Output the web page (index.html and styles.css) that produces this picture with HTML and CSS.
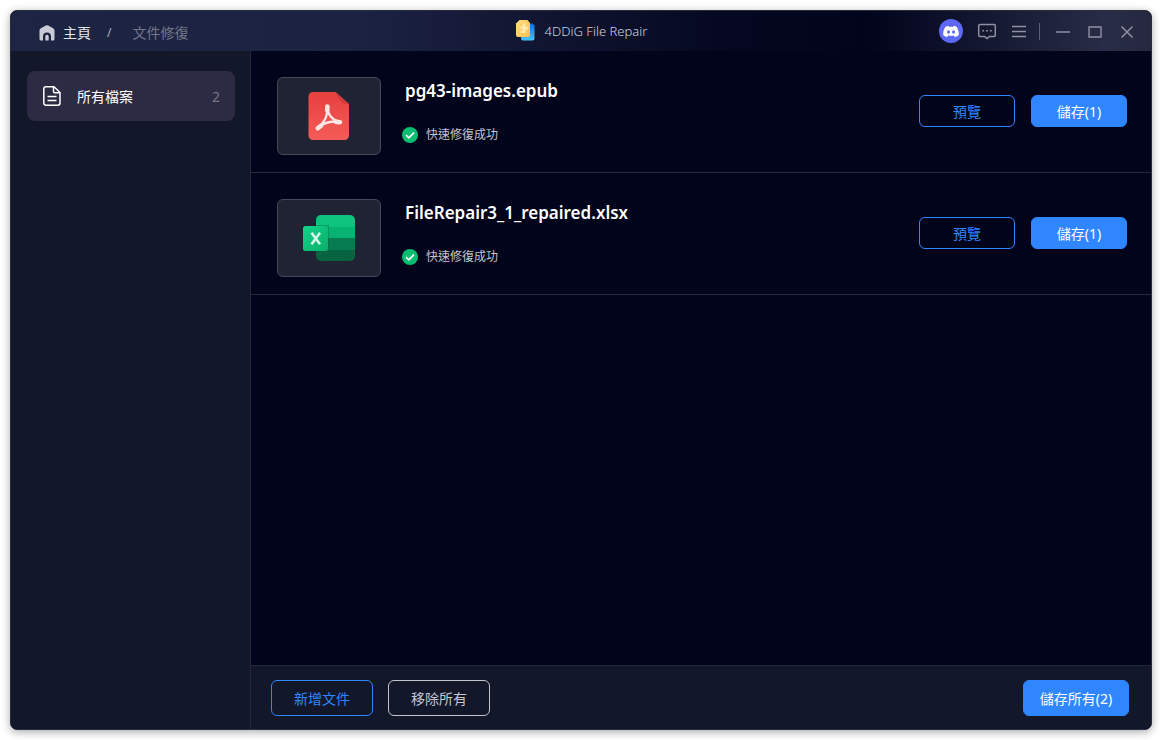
FILE: index.html
```
<!DOCTYPE html>
<html lang="zh-Hant">
<head>
    <meta charset="UTF-8">
    <meta name="viewport" content="width=device-width, initial-scale=1.0">
    <title>4DDiG File Repair</title>
    <link rel="stylesheet" href="styles.css">
</head>
<body>
    <div class="window">
        <header class="titlebar">
            <nav class="breadcrumb">
                <a class="home" href="#">
                    <svg width="16" height="16" viewBox="0 0 16 16"><path d="M6.800.6Q8 0 9.200.6l4.900 2.600Q15.500 4 15.500 5.600V14a1.500 1.500 0 0 1-1.500 1.500h-2V11.500a4 4 0 0 0-8 0v4H2A1.500 1.500 0 0 1 .5 14V5.600Q.5 4 1.900 3.200z" fill="#c9ccd6"/><path d="M6.300 15.500v-4a1.700 1.700 0 0 1 3.400 0v4z" fill="#c9ccd6"/></svg>
                    <span>主頁</span>
                </a>
                <span class="slash">/</span>
                <span class="current">文件修復</span>
            </nav>
            <div class="app-title">
                <svg width="20" height="22" viewBox="0 0 20 22">
                    <defs>
                        <linearGradient id="logoYellow" x1="0" y1="0" x2="1" y2="1"><stop offset="0" stop-color="#ffdc84"/><stop offset="1" stop-color="#ffc04a"/></linearGradient>
                        <linearGradient id="logoBlue" x1="0" y1="0" x2="0" y2="1"><stop offset="0" stop-color="#1667ee"/><stop offset="1" stop-color="#49c3ff"/></linearGradient>
                    </defs>
                    <path d="M8 3.500h9.500l2 2V18.500a2 2 0 0 1-2 2H8a2 2 0 0 1-2-2z" fill="url(#logoBlue)"/>
                    <path d="M4.500 0H12.500l2.500 3v12a2 2 0 0 1-2 2H3a2 2 0 0 1-2-2V3.500z" fill="url(#logoYellow)"/>
                    <path d="M8 3.500h2.500V7H13v2.500h-2.500v3.500H5.500v-2.500H8V9H5.500V6.500H8z" fill="#ffecae"/>
                </svg>
                <span>4DDiG File Repair</span>
            </div>
            <div class="controls">
                <button class="tool" type="button" aria-label="Discord">
                    <svg width="24" height="24" viewBox="0 0 24 24"><circle cx="12" cy="12" r="12" fill="#5f68f5"/><path d="M9.400 6.800 8.900 7.100C7.600 7.400 6.600 7.800 6.200 8.100 4.700 10.600 4.100 13.200 4.200 16c1.100 1.100 2.500 1.700 4 1.900l1-1.500c1.900.4 3.700.4 5.600 0l1 1.500c1.500-.2 2.900-.8 4-1.900.1-2.800-.5-5.400-2-7.900-.8-.6-1.900-1-3.200-1.300l-.6 1.100c-1.300-.2-2.700-.2-4 0z" fill="#fff"/><ellipse cx="9.500" cy="13" rx="1.500" ry="1.700" fill="#5f68f5"/><ellipse cx="14.500" cy="13" rx="1.500" ry="1.700" fill="#5f68f5"/></svg>
                </button>
                <button class="tool message" type="button" aria-label="意見">
                    <svg width="24" height="24" viewBox="0 0 24 24" fill="none" stroke="#8e91a2" stroke-width="1.500"><path d="M5 5.500h14a1.300 1.300 0 0 1 1.300 1.300v9.400A1.300 1.300 0 0 1 19 17.500h-4.500L12 19.500l-2.500-2H5a1.300 1.300 0 0 1-1.300-1.300V6.800A1.300 1.300 0 0 1 5 5.500z"/><path d="M7.300 11.800h1.800M11.100 11.800h1.800M14.900 11.800h1.800"/></svg>
                </button>
                <button class="tool" type="button" aria-label="選單">
                    <svg width="24" height="24" viewBox="0 0 24 24" stroke="#8e91a2" stroke-width="1.400"><path d="M5 7.500h14M5 12.500h14M5 17.500h14"/></svg>
                </button>
                <span class="divider"></span>
                <button class="tool minimize" type="button" aria-label="最小化">
                    <svg width="24" height="24" viewBox="0 0 24 24" stroke="#8e91a2" stroke-width="1.500"><path d="M5 13h14"/></svg>
                </button>
                <button class="tool" type="button" aria-label="最大化">
                    <svg width="24" height="24" viewBox="0 0 24 24" fill="none" stroke="#8e91a2" stroke-width="1.400"><path d="M6 8h12v10H6z"/></svg>
                </button>
                <button class="tool" type="button" aria-label="關閉">
                    <svg width="24" height="24" viewBox="0 0 24 24" stroke="#8e91a2" stroke-width="1.500"><path d="M6.500 7.500l11 11M17.500 7.500l-11 11"/></svg>
                </button>
            </div>
        </header>

        <aside class="sidebar">
            <a class="side-item" href="#">
                <svg width="18" height="20" viewBox="0 0 18 20" fill="none" stroke="#fff" stroke-width="1.500" stroke-linejoin="round"><path d="M3 .8h8L17 6.500V17a2.200 2.200 0 0 1-2.200 2.200H3A2.200 2.200 0 0 1 .8 17V3A2.200 2.200 0 0 1 3 .8z"/><path d="M10.500 1v4.300a1.500 1.500 0 0 0 1.500 1.500h4.800M4.500 10.500h9M4.500 14.500h9"/></svg>
                <span>所有檔案</span>
                <span class="count">2</span>
            </a>
        </aside>

        <main class="content">
            <ul class="files">
                <li class="file">
                    <div class="thumb">
                        <svg width="42" height="50" viewBox="0 0 42 50">
                            <defs><linearGradient id="pdfRed" x1="0" y1="0" x2="0" y2="1"><stop offset="0" stop-color="#e6413e"/><stop offset="1" stop-color="#f45b58"/></linearGradient></defs>
                            <path d="M5 1h22.500L41 13v31.500a4.500 4.500 0 0 1-4.500 4.500H5A4.500 4.500 0 0 1 .5 44.500v-39A4.500 4.500 0 0 1 5 1z" fill="url(#pdfRed)"/>
                            <path d="M27.500 1 41 13h-4Q31 11 27.500 1z" fill="#d23a3c"/>
                            <path d="M19.400 15.500c0 7.500 4.600 14 13 15.500M19.400 15.500c1 8-2.400 15.500-10 22M9.400 37.500c5-5 13-8 23-6.500" fill="none" stroke="#ffe5e4" stroke-width="2.400" stroke-linecap="round"/>
                            <path d="M19.300 15.500v4M32 31.200l-4-.3M9.800 37.300l3.200-2.600" fill="none" stroke="#ffe5e4" stroke-width="4.600" stroke-linecap="round"/>
                        </svg>
                    </div>
                    <div class="info">
                        <h2 class="name">pg43-images.epub</h2>
                        <p class="status">
                            <svg width="16" height="16" viewBox="0 0 16 16"><circle cx="8" cy="8" r="8" fill="#0abd70"/><path d="m4 8.200 2.800 2.700L12 5.600" fill="none" stroke="#fff" stroke-width="1.600"/></svg>
                            <span>快速修復成功</span>
                        </p>
                    </div>
                    <div class="actions">
                        <button class="btn outline" type="button">預覽</button>
                        <button class="btn primary" type="button">儲存(1)</button>
                    </div>
                </li>
                <li class="file">
                    <div class="thumb">
                        <svg width="52" height="48" viewBox="0 0 52 48">
                            <defs>
                                <clipPath id="sheet"><rect x="13" y="1" width="39" height="46" rx="5"/></clipPath>
                                <linearGradient id="xlsGreen" x1="0" y1="0" x2="1" y2="1"><stop offset="0" stop-color="#12d48a"/><stop offset="1" stop-color="#0aae69"/></linearGradient>
                            </defs>
                            <g clip-path="url(#sheet)">
                                <path d="M13 1h39v12H13z" fill="#0dc37d"/>
                                <path d="M13 13h39v11H13z" fill="#08b372"/>
                                <path d="M13 24h39v12H13z" fill="#067d50"/>
                                <path d="M13 36h39v11H13z" fill="#076340"/>
                                <path d="M13 11h13v27H13z" fill="#045f3d" opacity=".35"/>
                            </g>
                            <rect y="12" width="25" height="25" rx="2.500" fill="url(#xlsGreen)"/>
                            <path d="m8.500 18.800 8.500 11.400M17 18.800 8.500 30.200" stroke="#d5f8e9" stroke-width="2.600"/>
                        </svg>
                    </div>
                    <div class="info">
                        <h2 class="name">FileRepair3_1_repaired.xlsx</h2>
                        <p class="status">
                            <svg width="16" height="16" viewBox="0 0 16 16"><circle cx="8" cy="8" r="8" fill="#0abd70"/><path d="m4 8.200 2.800 2.700L12 5.600" fill="none" stroke="#fff" stroke-width="1.600"/></svg>
                            <span>快速修復成功</span>
                        </p>
                    </div>
                    <div class="actions">
                        <button class="btn outline" type="button">預覽</button>
                        <button class="btn primary" type="button">儲存(1)</button>
                    </div>
                </li>
            </ul>
            <footer class="footer">
                <button class="btn large outline" type="button">新增文件</button>
                <button class="btn large plain" type="button">移除所有</button>
                <button class="btn large primary save-all" type="button">儲存所有(2)</button>
            </footer>
        </main>
    </div>
</body>
</html>
```
FILE: styles.css
```
* {
    box-sizing: border-box;
}
body {
    margin: 0;
    padding: 10px;
    height: 100vh;
    background-color: #fff;
    font-family: "Noto Sans", "Noto Sans CJK TC", sans-serif;
    font-size: 14px;
    color: #fff;
}
a {
    color: inherit;
    text-decoration: none;
}
svg {
    display: block;
    flex-shrink: 0;
}
.window {
    height: 100%;
    display: grid;
    grid-template-columns: 240px 1fr;
    grid-template-rows: 40px 1fr;
    border: 1px solid #292c3e;
    border-radius: 7px;
    overflow: hidden;
    background-color: #01041b;
    box-shadow: 0 2px 8px rgba(0, 0, 0, 0.35);
}

/* title bar */
.titlebar {
    grid-column: 1 / 3;
    display: grid;
    grid-template-columns: 1fr auto 1fr;
    align-items: center;
    padding: 0 12px;
    background: linear-gradient(90deg, #1e2543 0%, #1c2342 30%, #050820 62%, #01041b 75%, #141831 86%, #292c46 96%, #25283f 100%);
}
.breadcrumb {
    display: flex;
    align-items: center;
    line-height: 20px;
    padding: 4px 0 0 16px;
}
.home {
    display: flex;
    align-items: center;
    gap: 8px;
    color: #e2e4ea;
}
.slash {
    margin-left: 16px;
    font-size: 12px;
    color: #b0b3c0;
}
.current {
    margin-left: 21px;
    color: #727689;
}
.app-title {
    display: flex;
    align-items: center;
    gap: 10px;
    font-size: 13px;
    font-weight: 300;
    color: #d0d3de;
}
.controls {
    display: flex;
    align-items: center;
    justify-content: flex-end;
    gap: 8px;
}
.tool {
    padding: 0;
    border: 0;
    background: none;
}
.message {
    margin-left: 4px;
}
.divider {
    width: 1px;
    height: 17px;
    background-color: #5b5e70;
}
.minimize {
    margin-left: 3px;
}

/* sidebar */
.sidebar {
    padding: 20px 15px 0 16px;
    background-color: #13172a;
    border-right: 1px solid #25283a;
}
.side-item {
    display: flex;
    align-items: center;
    gap: 16px;
    height: 50px;
    padding: 0 15px 0 16px;
    border-radius: 8px;
    background-color: #2d2b44;
}
.count {
    margin-left: auto;
    color: #777587;
}

/* file list */
.content {
    display: flex;
    flex-direction: column;
    min-width: 0;
}
.files {
    flex: 1;
    margin: 0;
    padding: 0;
    list-style: none;
}
.file {
    display: flex;
    align-items: center;
    padding: 26px 24px 17px 26px;
    border-bottom: 1px solid #25283a;
}
.thumb {
    display: flex;
    align-items: center;
    justify-content: center;
    width: 104px;
    height: 78px;
    border: 1px solid #454858;
    border-radius: 6px;
    background-color: #202334;
}
.info {
    flex: 1;
    align-self: flex-start;
    margin-left: 21px;
}
.name {
    margin: 0;
    padding-left: 3px;
    font-size: 17px;
    font-weight: 600;
    line-height: 28px;
}
.status {
    display: flex;
    align-items: center;
    gap: 8px;
    margin: 20px 0 0;
    font-size: 12px;
    line-height: 20px;
    color: #c3c6d2;
}
.actions {
    display: flex;
    gap: 16px;
    margin-bottom: 10px;
}
.btn {
    width: 96px;
    height: 32px;
    padding: 0;
    border: 1px solid #2f86ff;
    border-radius: 6px;
    font: inherit;
    white-space: nowrap;
}
.outline {
    background: none;
    color: #2f86ff;
}
.primary {
    background-color: #2f86ff;
    color: #fff;
}
.plain {
    background: none;
    border-color: #c3c4cc;
    color: #c3c6d2;
}

/* bottom bar */
.footer {
    display: flex;
    align-items: center;
    gap: 15px;
    height: 64px;
    padding: 0 22px 0 20px;
    background-color: #13172a;
    border-top: 1px solid #25283a;
}
.large {
    width: 102px;
    height: 36px;
}
.save-all {
    width: 106px;
    margin-left: auto;
}
```
